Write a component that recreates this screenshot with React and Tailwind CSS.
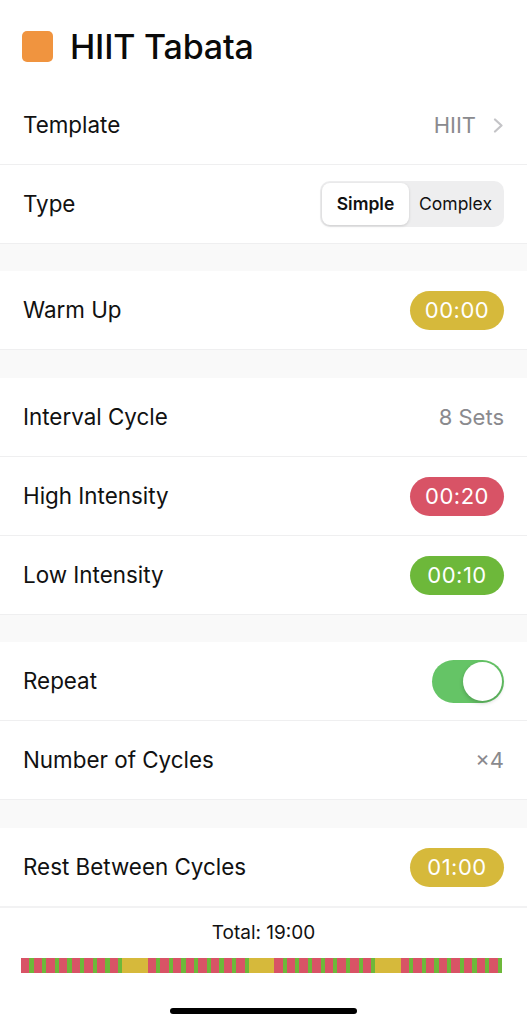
const pillColor = {
  yellow: 'bg-[#d6b93b]',
  red: 'bg-[#d85366]',
  green: 'bg-[#6db83a]',
}

function Pill({ color, children }) {
  return (
    <span
      className={`${pillColor[color]} h-[39px] w-[94px] rounded-full flex items-center justify-center text-white text-[22px] tracking-[0.5px]`}
    >
      {children}
    </span>
  )
}

function Row({ label, last, children }) {
  return (
    <div
      className={`flex items-center justify-between pl-[23px] pr-[23px] bg-white ${
        last ? 'h-[78px]' : 'h-[79px] border-b border-[#efeff0]'
      }`}
    >
      <span className="text-[22.4px] text-[#111]">{label}</span>
      {children}
    </div>
  )
}

function Gap({ tall }) {
  return (
    <div className={`${tall ? 'h-[29px]' : 'h-[28px]'} bg-[#f9f9f9] border-t border-[#efeff0]`} />
  )
}

function Segmented() {
  return (
    <div className="h-[46px] w-[184px] rounded-[10px] bg-[#eeeeef] p-[2px] flex items-stretch text-[17.5px]">
      <div className="w-[87px] rounded-[8px] bg-white shadow-[0_1px_3px_rgba(0,0,0,0.15)] flex items-center justify-center font-semibold text-[#111]">
        Simple
      </div>
      <div className="flex-1 flex items-center justify-center font-normal text-[#111]">Complex</div>
    </div>
  )
}

function Toggle() {
  return (
    <div className="relative h-[43px] w-[72px] rounded-full bg-[#65c466]">
      <div className="absolute right-[2px] top-[2px] h-[39px] w-[39px] rounded-full bg-white shadow-[0_2px_4px_rgba(0,0,0,0.2)]" />
    </div>
  )
}

// timeline: 4 cycles of 8 × (20s high, 10s low), 60s rest between cycles
function buildSegments() {
  const segs = []
  for (let c = 0; c < 4; c++) {
    for (let s = 0; s < 8; s++) {
      segs.push({ d: 20, c: 'bg-[#d85366]' })
      segs.push({ d: 10, c: 'bg-[#6db83a]' })
    }
    if (c < 3) segs.push({ d: 60, c: 'bg-[#d6b93b]' })
  }
  return segs
}

export default function App() {
  const segs = buildSegments()
  const total = segs.reduce((a, s) => a + s.d, 0)

  return (
    <div className="w-[527px] h-[1024px] bg-white flex flex-col font-['Inter',sans-serif] overflow-hidden">
      {/* Header */}
      <div className="h-[86px] pt-[6px] flex items-center pl-[22px] gap-[17px]">
        <div className="w-[31px] h-[31px] rounded-[5px] bg-[#f0943f]" />
        <h1 className="text-[34px] font-medium text-[#0a0a0a] tracking-[-0.2px]">HIIT Tabata</h1>
      </div>

      <Row label="Template">
        <span className="flex items-center gap-[17px] text-[22px] text-[#8a8a8e]">
          HIIT
          <svg width="11" height="15" viewBox="0 0 11 15" fill="none">
            <path d="M2 1.5 L8.5 7.5 L2 13.5" stroke="#c4c4c7" strokeWidth="2.2" strokeLinecap="round" strokeLinejoin="round" />
          </svg>
        </span>
      </Row>
      <Row label="Type" last>
        <Segmented />
      </Row>

      <Gap />
      <Row label="Warm Up" last>
        <Pill color="yellow">00:00</Pill>
      </Row>

      <Gap tall />
      <Row label="Interval Cycle">
        <span className="text-[22px] text-[#8a8a8e]">8 Sets</span>
      </Row>
      <Row label="High Intensity">
        <Pill color="red">00:20</Pill>
      </Row>
      <Row label="Low Intensity" last>
        <Pill color="green">00:10</Pill>
      </Row>

      <Gap />
      <Row label="Repeat">
        <Toggle />
      </Row>
      <Row label="Number of Cycles" last>
        <span className="text-[22px] text-[#8a8a8e]">×4</span>
      </Row>

      <Gap tall />
      <Row label="Rest Between Cycles" last>
        <Pill color="yellow">01:00</Pill>
      </Row>

      {/* Footer */}
      <div className="flex-1 border-t-2 border-[#f2f2f3] flex flex-col items-center">
        <div className="pt-[12px] text-[19px] text-[#111] leading-[26px]">Total: 19:00</div>
        <div className="mt-[12px] self-start ml-[21px] w-[481px] h-[15px] flex">
          {segs.map((s, i) => (
            <div key={i} className={s.c} style={{ width: `${(s.d / total) * 100}%` }} />
          ))}
        </div>
        <div className="mt-[35px] w-[187px] h-[6px] rounded-full bg-black" />
      </div>
    </div>
  )
}
